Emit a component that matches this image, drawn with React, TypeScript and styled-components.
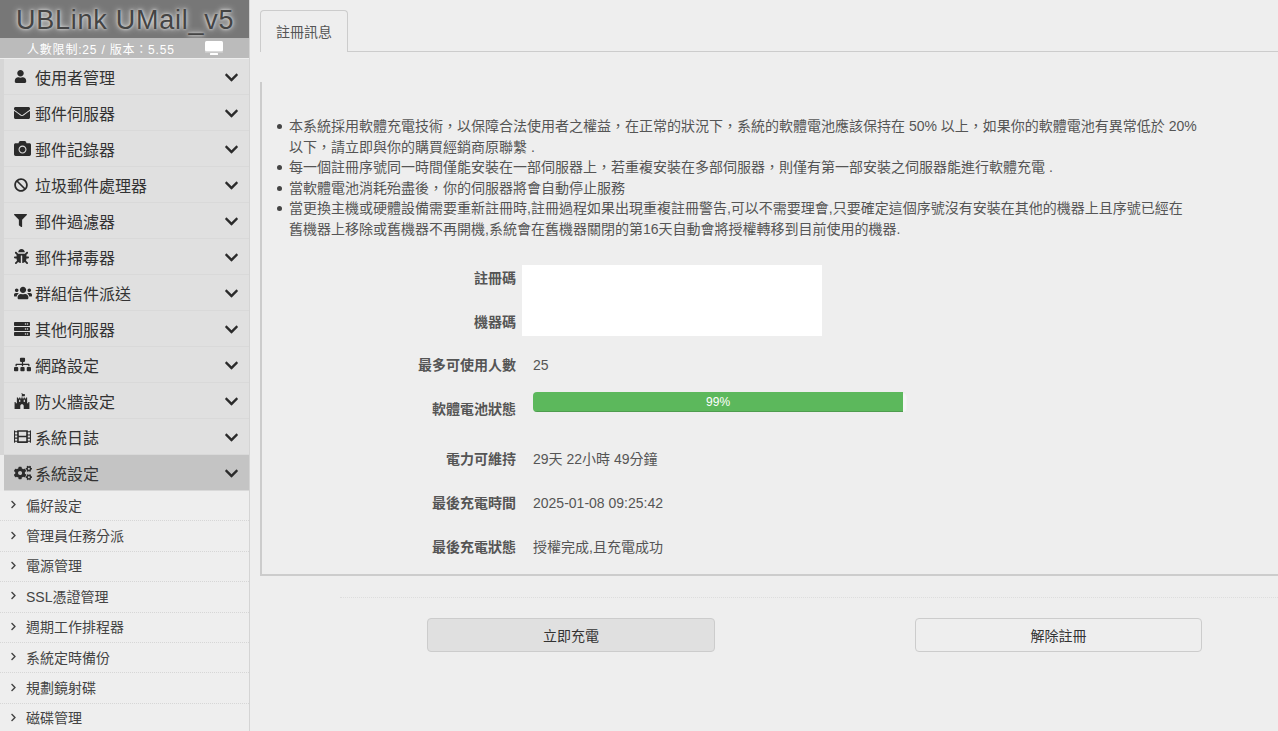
import React from "react";
import styled, { createGlobalStyle } from "styled-components";
import {
  FaUser, FaEnvelope, FaCamera, FaBan, FaFilter, FaBug, FaUsers, FaServer,
  FaSitemap, FaFortAwesome, FaFilm, FaCogs, FaChevronDown, FaChevronRight,
} from "react-icons/fa";

const Global = createGlobalStyle`
  html, body { margin: 0; padding: 0; height: 100%; overflow: hidden; }
  body {
    background: #eeeeee;
    color: #555;
    font-family: "Liberation Sans", "Noto Sans CJK TC", sans-serif;
    font-size: 14px;
  }
  * { box-sizing: border-box; }
`;

const Page = styled.div`
  display: flex;
  width: 1278px;
  height: 731px;
  overflow: hidden;
`;

const Sidebar = styled.aside`
  flex: 0 0 250px;
  width: 250px;
  height: 731px;
  overflow: hidden;
  border-right: 1px solid #d4d4d4;
`;

const Brand = styled.div`
  height: 38px;
  background: #777;
  color: #444;
  font-size: 27px;
  line-height: 41px;
  letter-spacing: 0.75px;
  padding-left: 16px;
  white-space: nowrap;
  overflow: hidden;
  text-shadow: 0 0 6px #eee, 0 0 3px #ddd;
`;

const Status = styled.div`
  height: 20px;
  background: #bbb;
  color: #fff;
  font-size: 12px;
  display: flex;
  align-items: center;
  justify-content: space-between;
  padding: 0 26px 0 27px;
  letter-spacing: 0.8px;
`;

const Menu = styled.nav`
  display: flex;
  flex-direction: column;
  margin-top: 1px;
`;

const MenuItem = styled.div<{ $active?: boolean }>`
  height: 36px;
  flex: none;
  margin-left: 4px;
  display: flex;
  align-items: center;
  padding: 0 10px 0 10px;
  background: ${(p) => (p.$active ? "#c4c4c4" : "#e0e0e0")};
  border-bottom: 1px solid #d9d9d9;
  box-shadow: -4px 0 0 ${(p) => (p.$active ? "#ececec" : "#d6d6d6")};
  color: #333;
  font-size: 16px;
`;

const IconSlot = styled.span`
  width: 21px;
  flex: none;
  display: flex;
  align-items: center;
  color: #2b2b2b;
  svg { display: block; }
`;

const MenuLabel = styled.span`
  flex: 1;
`;

const Chevron = styled(FaChevronDown)`
  color: #2b2b2b;
  font-size: 15px;
  margin-top: 1px;
`;

const SubMenu = styled.div`
  display: flex;
  flex-direction: column;
`;

const SubItem = styled.div`
  height: 30.4px;
  flex: none;
  display: flex;
  align-items: center;
  padding: 0 0 2px 9px;
  border-bottom: 1px dotted #d6d6d6;
  color: #444;
  font-size: 14px;
  svg { font-size: 9px; color: #444; margin-right: 8px; }
`;

const Main = styled.main`
  flex: 1;
  min-width: 0;
  padding: 10px 0 0 10px;
`;

const Tabs = styled.div`
  display: flex;
  height: 42px;
  border-bottom: 1px solid #ccc;
`;

const Tab = styled.div`
  width: 88px;
  height: 42px;
  padding-bottom: 2px;
  border: 1px solid #ccc;
  border-bottom: none;
  border-radius: 4px 4px 0 0;
  background: #eee;
  display: flex;
  align-items: center;
  justify-content: center;
  color: #555;
  font-size: 14px;
`;

const TabBody = styled.div`
  margin-top: 30px;
  height: 494px;
  border-left: 2px solid #ccc;
  border-bottom: 2px solid #ccc;
  padding: 34px 0 0 14px;
`;

const Notes = styled.ul`
  margin: 0;
  padding: 0 0 0 13px;
  width: 960px;
  line-height: 20.6px;
  font-size: 14px;
  color: #555;
  list-style: none;
  white-space: pre-line;
  li::before {
    content: "";
    display: inline-block;
    width: 5px;
    height: 5px;
    border-radius: 50%;
    background: #444;
    margin: 0 7px 2px -12px;
    vertical-align: middle;
  }
`;

const Form = styled.div`
  display: grid;
  grid-template-columns: 240px 1fr;
  grid-template-rows: 44px 43px 44px 50px 44px 44px 44px;
  margin-top: 25px;
`;

const Label = styled.div`
  text-align: right;
  font-weight: 700;
  color: #555;
  font-size: 14px;
  line-height: 20px;
  padding-top: 3px;
`;

const Value = styled.div`
  padding: 3px 0 0 17px;
  line-height: 20px;
  color: #555;
`;

const Masked = styled.div`
  grid-column: 2;
  grid-row: 1 / span 2;
  margin: 0 0 0 6px;
  width: 300px;
  height: 71px;
  background: #fff;
`;

const BarCell = styled.div`
  padding-left: 17px;
`;

const Bar = styled.div`
  width: 374px;
  height: 20px;
  margin-top: -4px;
  border-radius: 4px;
  background: #f5f5f5;
  overflow: hidden;
  box-shadow: inset 0 1px 2px rgba(0,0,0,.05);
`;

const BarFill = styled.div`
  height: 100%;
  background: #5cb85c;
  color: #fff;
  font-size: 12px;
  line-height: 20px;
  text-align: center;
  box-shadow: inset 0 -1px 0 rgba(0,0,0,.15);
`;

const Divider = styled.div`
  margin: 21px 0 0 80px;
  border-top: 1px dotted #ddd;
`;

const Actions = styled.div`
  display: grid;
  grid-template-columns: 288px 287px;
  column-gap: 200px;
  margin: 20px 0 0 167px;
`;

const Button = styled.button<{ $filled?: boolean }>`
  height: 34px;
  border: 1px solid #ccc;
  border-radius: 4px;
  background: ${(p) => (p.$filled ? "#e0e0e0" : "#eee")};
  color: #333;
  font: 14px "Liberation Sans", "Noto Sans CJK TC", sans-serif;
  padding: 0;
`;

const DesktopIcon = () => (
  <svg width="18" height="14" viewBox="0 0 18 14" fill="#fff" aria-hidden="true">
    <rect x="0" y="0" width="18" height="10.5" rx="1.5" />
    <rect x="0" y="10.5" width="18" height="1" fill="#d8d8d8" />
    <rect x="5" y="12" width="8" height="2" rx="0.5" />
  </svg>
);

const items: [React.ComponentType<{ size?: number }>, string, number][] = [
  [FaUser, "使用者管理", 13],
  [FaEnvelope, "郵件伺服器", 16],
  [FaCamera, "郵件記錄器", 17],
  [FaBan, "垃圾郵件處理器", 14],
  [FaFilter, "郵件過濾器", 13],
  [FaBug, "郵件掃毒器", 15],
  [FaUsers, "群組信件派送", 18],
  [FaServer, "其他伺服器", 16],
  [FaSitemap, "網路設定", 17],
  [FaFortAwesome, "防火牆設定", 16],
  [FaFilm, "系統日誌", 17],
  [FaCogs, "系統設定", 18],
];

const subs = ["偏好設定", "管理員任務分派", "電源管理", "SSL憑證管理", "週期工作排程器", "系統定時備份", "規劃鏡射碟", "磁碟管理"];

const notes = [
  "本系統採用軟體充電技術，以保障合法使用者之權益，在正常的狀況下，系統的軟體電池應該保持在 50% 以上，如果你的軟體電池有異常低於 20%\n以下，請立即與你的購買經銷商原聯繫 .",
  "每一個註冊序號同一時間僅能安裝在一部伺服器上，若重複安裝在多部伺服器，則僅有第一部安裝之伺服器能進行軟體充電 .",
  "當軟體電池消耗殆盡後，你的伺服器將會自動停止服務",
  "當更換主機或硬體設備需要重新註冊時,註冊過程如果出現重複註冊警告,可以不需要理會,只要確定這個序號沒有安裝在其他的機器上且序號已經在\n舊機器上移除或舊機器不再開機,系統會在舊機器關閉的第16天自動會將授權轉移到目前使用的機器.",
];

export default function App() {
  return (
    <Page>
      <Global />
      <Sidebar>
        <Brand>UBLink UMail_v5</Brand>
        <Status>
          <span>人數限制:25 / 版本：5.55</span>
          <DesktopIcon />
        </Status>
        <Menu>
          {items.map(([Icon, label, size], i) => (
            <MenuItem key={label} $active={i === items.length - 1}>
              <IconSlot><Icon size={size} /></IconSlot>
              <MenuLabel>{label}</MenuLabel>
              <Chevron />
            </MenuItem>
          ))}
        </Menu>
        <SubMenu>
          {subs.map((s) => (
            <SubItem key={s}><FaChevronRight />{s}</SubItem>
          ))}
        </SubMenu>
      </Sidebar>
      <Main>
        <Tabs><Tab>註冊訊息</Tab></Tabs>
        <TabBody>
          <Notes>
            {notes.map((n) => <li key={n}>{n}</li>)}
          </Notes>
          <Form>
            <Label>註冊碼</Label>
            <Masked />
            <Label>機器碼</Label>
            <Label>最多可使用人數</Label><Value>25</Value>
            <Label>軟體電池狀態</Label>
            <BarCell>
              <Bar><BarFill style={{ width: "99%" }}>99%</BarFill></Bar>
            </BarCell>
            <Label>電力可維持</Label><Value>29天 22小時 49分鐘</Value>
            <Label>最後充電時間</Label><Value>2025-01-08 09:25:42</Value>
            <Label>最後充電狀態</Label><Value>授權完成,且充電成功</Value>
          </Form>
        </TabBody>
        <Divider />
        <Actions>
          <Button $filled>立即充電</Button>
          <Button>解除註冊</Button>
        </Actions>
      </Main>
    </Page>
  );
}
